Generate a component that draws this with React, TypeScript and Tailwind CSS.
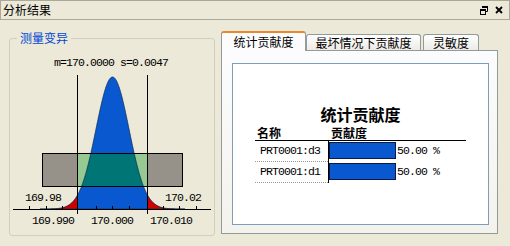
import React from "react";

const CJK = '"Noto Sans CJK SC", "Noto Sans", sans-serif';
const MONO = '"Liberation Mono", "DejaVu Sans Mono", monospace';

function curvePath(): string {
  const c = 112.5;
  const base = 209;
  const h = 132;
  const s = 16.5;
  const pts: string[] = [];
  for (let x = 40; x <= 185; x += 0.5) {
    const z = (x - c) / s;
    const y = base - h * Math.exp(-(z * z) / 2);
    pts.push(`${x.toFixed(1)},${y.toFixed(2)}`);
  }
  return `M40,${base} L${pts.join(" L")} L185,${base} Z`;
}

function Chart() {
  const d = curvePath();
  const ticks = [29, 46, 62, 96, 112, 129, 163, 179, 196];
  const txt = { fontFamily: MONO, fontSize: 11.5, letterSpacing: -0.9 } as React.CSSProperties;
  return (
    <svg width="204" height="196" viewBox="10 39 204 196" className="block">
      <defs>
        <clipPath id="outL">
          <rect x="0" y="0" width="77.5" height="300" />
        </clipPath>
        <clipPath id="outR">
          <rect x="147.5" y="0" width="100" height="300" />
        </clipPath>
        <clipPath id="mid">
          <rect x="77.5" y="153.5" width="70" height="33" />
        </clipPath>
      </defs>
      <path d={d} fill="#0a58d0" />
      <path d={d} fill="#d00000" clipPath="url(#outL)" />
      <path d={d} fill="#d00000" clipPath="url(#outR)" />
      <rect x="42.5" y="153.5" width="140" height="33" fill="#96928a" />
      <rect x="77.5" y="153.5" width="70" height="33" fill="#96ca92" />
      <path d={d} fill="#007575" clipPath="url(#mid)" />
      <path d={d} fill="none" stroke="#0b2a4a" strokeWidth="0.7" />
      <rect x="42.5" y="153.5" width="140" height="33" fill="none" stroke="#000" strokeWidth="1" />
      <line x1="77.5" y1="75" x2="77.5" y2="214" stroke="#000" strokeWidth="1" />
      <line x1="147.5" y1="75" x2="147.5" y2="214" stroke="#000" strokeWidth="1" />
      <line x1="13" y1="209.5" x2="211" y2="209.5" stroke="#000" strokeWidth="1" />
      {ticks.map((t) => (
        <line key={t} x1={t + 0.5} y1="206" x2={t + 0.5} y2="209" stroke="#000" strokeWidth="1" />
      ))}
      <text x="54" y="66" style={txt} fill="#000">m=170.0000 s=0.0047</text>
      <text x="25" y="201" style={txt} fill="#000">169.98</text>
      <text x="165" y="201" style={txt} fill="#000">170.02</text>
      <text x="32" y="224" style={txt} fill="#000">169.990</text>
      <text x="91" y="224" style={txt} fill="#000">170.000</text>
      <text x="150" y="224" style={txt} fill="#000">170.010</text>
    </svg>
  );
}

function Row({ name }: { name: string }) {
  return (
    <div className="flex h-[21px]">
      <div
        className="w-[73px] h-[21px] border-b border-dotted border-[#9a9a9a] pl-[5px] text-[11.5px] leading-[20px] tracking-[-0.9px]"
        style={{ fontFamily: MONO }}
      >
        {name}
      </div>
      <div className="flex items-start border-l border-black pt-[1px]">
        <div className="w-[67px] h-[17px] bg-[#0a58d0] border border-[#0a1a48]" />
        <span
          className="ml-[1px] text-[11.5px] leading-[17px] tracking-[-0.9px]"
          style={{ fontFamily: MONO }}
        >
          50.00 %
        </span>
      </div>
    </div>
  );
}

export default function App() {
  return (
    <div
      className="w-[510px] h-[246px] bg-[#ece9d8] flex flex-col overflow-hidden text-black"
      style={{ fontFamily: CJK }}
    >
      <div className="h-[20px] shrink-0 border border-[#aca899] flex items-center justify-between pl-[2px] pr-[6px]">
        <span className="text-[12px] leading-[12px]">分析结果</span>
        <div className="flex items-center gap-[7px]">
          <svg width="8" height="9" viewBox="0 0 8 9">
            <path d="M2.5 0.5 H7.5 V5.5 H5.5" fill="none" stroke="#000" strokeWidth="1" />
            <rect x="2" y="0" width="6" height="2" fill="#000" />
            <rect x="0.5" y="3.5" width="5" height="5" fill="none" stroke="#000" strokeWidth="1" />
            <rect x="0" y="3" width="6" height="2" fill="#000" />
          </svg>
          <svg width="8" height="8" viewBox="0 0 8 8">
            <path d="M1 1 L7 7 M7 1 L1 7" stroke="#000" strokeWidth="1.8" />
          </svg>
        </div>
      </div>
      <div className="flex items-start">
        <div className="relative ml-[9px] mt-[18px] w-[206px] h-[198px] border border-[#d0d0bf] rounded-[3px]">
          <span className="absolute left-[7px] top-[-7px] px-[3px] bg-[#ece9d8] text-[#0046d5] text-[12px] leading-[12px]">
            测量变异
          </span>
          <Chart />
        </div>
        <div className="ml-[6px] mt-[11px] flex flex-col">
          <div className="flex items-end h-[19px] text-[12px] leading-[12px]">
            <div className="relative z-10 -mb-px w-[85px] h-[20px] flex items-center justify-center bg-[#fcfcfe] border-x border-[#919b9c] border-t-2 border-t-[#e68b2c] rounded-t-[3px]">
              统计贡献度
            </div>
            <div className="w-[115px] h-[16px] flex items-center justify-center bg-gradient-to-b from-[#ffffff] to-[#ecebe6] border-x border-t border-[#919b9c] rounded-t-[3px]">
              最坏情况下贡献度
            </div>
            <div className="ml-[2px] w-[56px] h-[16px] flex items-center justify-center bg-gradient-to-b from-[#ffffff] to-[#ecebe6] border-x border-t border-[#919b9c] rounded-t-[3px]">
              灵敏度
            </div>
          </div>
          <div className="w-[277px] h-[184px] border border-[#919b9c] bg-gradient-to-b from-[#fcfcfe] to-[#f3f2ec] pl-[10px] pt-[12px]">
            <div className="w-[257px] h-[162px] border border-[#7f9db9] bg-white flex flex-col">
              <div className="mt-[42px] text-center font-bold text-[16px] leading-[16px]">统计贡献度</div>
              <div className="ml-[22px] mt-[3px] w-[211px] h-[16px] flex items-center border-b border-black font-bold text-[12px] leading-[12px]">
                <span className="w-[74px] pl-[2px]">名称</span>
                <span className="pl-[2px]">贡献度</span>
              </div>
              <div className="ml-[22px] flex flex-col">
                <Row name="PRT0001:d3" />
                <Row name="PRT0001:d1" />
              </div>
            </div>
          </div>
        </div>
      </div>
    </div>
  );
}
